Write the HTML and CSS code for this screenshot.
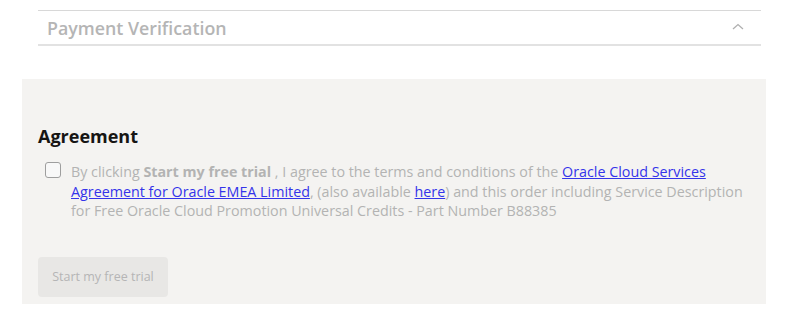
FILE: index.html
```html
<!DOCTYPE html>
<html lang="en">
<head>
<meta charset="utf-8">
<title>Payment Verification</title>
<link rel="stylesheet" href="styles.css">
</head>
<body>
<div class="accordion">
  <div class="acc-header">
    <span class="acc-title">Payment Verification</span>
    <svg class="chevron" width="12" height="7" viewBox="0 0 12 7" aria-hidden="true"><polyline points="1,6 6,1.5 11,6" fill="none" stroke="#b0b0b0" stroke-width="1.3"/></svg>
  </div>
</div>
<section class="panel">
  <h2 class="panel-title">Agreement</h2>
  <label class="agree-row">
    <span class="checkbox"></span>
    <span class="agree-text">By clicking <b>Start my free trial</b> , I agree to the terms and conditions of the <a href="#">Oracle Cloud Services Agreement for Oracle EMEA Limited</a>, (also available <a href="#">here</a>) and this order including Service Description for Free Oracle Cloud Promotion Universal Credits - Part Number B88385</span>
  </label>
  <button class="trial-btn" disabled>Start my free trial</button>
</section>
</body>
</html>
```
FILE: styles.css
```css
html, body {
  margin: 0;
  padding: 0;
  background: #ffffff;
}
body {
  font-family: "Open Sans", "Noto Sans", sans-serif;
  width: 796px;
}
.accordion {
  margin: 10px 0 0 38px;
  width: 723px;
  border-top: 1px solid #d8d8d8;
  border-bottom: 2px solid #e2e2e2;
}
.acc-header {
  height: 33px;
  display: flex;
  align-items: center;
  justify-content: space-between;
  padding: 0 17px 0 9px;
}
.acc-title {
  font-size: 17.8px;
  font-weight: 600;
  color: #b5b5b5;
}
.chevron {
  display: block;
  margin-top: -3px;
}
.panel {
  margin: 33px 0 0 22px;
  width: 744px;
  height: 225px;
  box-sizing: border-box;
  background: #f4f3f1;
  padding: 45px 16px 0 16px;
}
.panel-title {
  margin: 0;
  font-size: 18px;
  line-height: 24px;
  font-weight: 700;
  color: #161513;
}
.agree-row {
  display: flex;
  align-items: flex-start;
  margin-top: 14px;
  padding-left: 7px;
}
.checkbox {
  flex: none;
  width: 14px;
  height: 14px;
  border: 1px solid #9e9e9e;
  border-radius: 3px;
  background: #f8f8f8;
  margin-top: 0;
  margin-right: 10px;
}
.agree-text {
  font-size: 14.3px;
  line-height: 19.5px;
  color: #b3b3b3;
  width: 680px;
}
.agree-text b {
  font-weight: 700;
}
.agree-text a {
  color: #3434ea;
  text-decoration: underline;
}
.trial-btn {
  display: block;
  margin-top: 36px;
  width: 130px;
  height: 40px;
  border: none;
  border-radius: 4px;
  background: #e8e7e5;
  color: #b5b5b5;
  font-family: "Open Sans", "Noto Sans", sans-serif;
  font-size: 12.5px;
  padding: 0;
}
```
